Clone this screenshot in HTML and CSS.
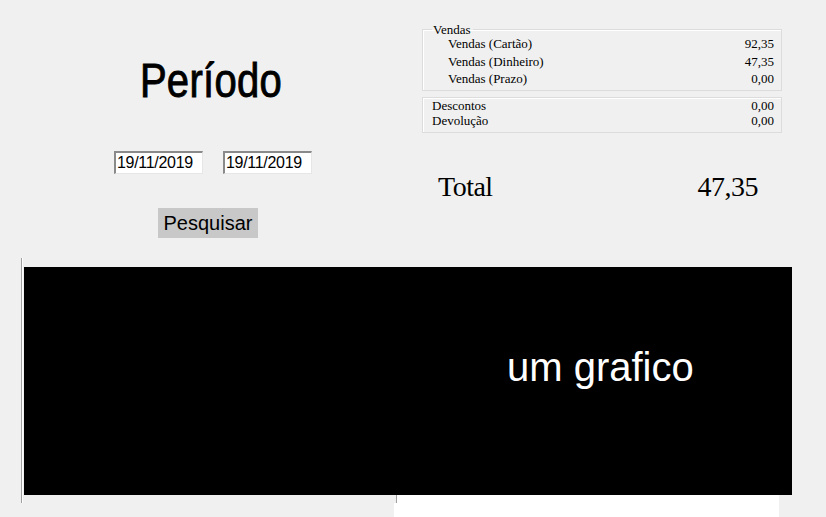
FILE: index.html
```html
<!DOCTYPE html>
<html lang="pt">
<head>
<meta charset="utf-8">
<title>Período</title>
<link rel="stylesheet" href="styles.css">
</head>
<body>
<div class="top">
  <div class="left">
    <div class="heading">Período</div>
    <div class="dates">
      <div class="date">19/11/2019</div>
      <div class="date">19/11/2019</div>
    </div>
    <div class="btn">Pesquisar</div>
  </div>
  <div class="right">
    <fieldset class="group">
      <legend>Vendas</legend>
      <div class="rows sub">
        <div class="row"><span>Vendas (Cartão)</span><span>92,35</span></div>
        <div class="row"><span>Vendas (Dinheiro)</span><span>47,35</span></div>
        <div class="row"><span>Vendas (Prazo)</span><span>0,00</span></div>
      </div>
    </fieldset>
    <div class="group2">
      <div class="row2"><span>Descontos</span><span>0,00</span></div>
      <div class="row2"><span>Devolução</span><span>0,00</span></div>
    </div>
    <div class="total"><span>Total</span><span>47,35</span></div>
  </div>
</div>
<div class="chart-row">
  <div class="rule"></div>
  <div class="chart-col">
    <div class="chart"><span class="chart-label">um grafico</span></div>
    <div class="under"></div>
  </div>
</div>
</body>
</html>
```
FILE: styles.css
```css
html, body {
  margin: 0;
  padding: 0;
  background: #f0f0f0;
  width: 826px;
  height: 517px;
  overflow: hidden;
  font-family: "Liberation Sans", Arial, sans-serif;
  color: #000;
}
.top {
  display: flex;
  height: 258px;
}
.left {
  width: 420px;
  display: flex;
  flex-direction: column;
  align-items: center;
  padding-top: 60px;
  box-sizing: border-box;
}
.heading {
  font-size: 40px;
  line-height: 40px;
  height: 40px;
  transform: scaleY(1.2);
  margin-left: 2px;
  letter-spacing: 0.3px;
  color: #000;
  -webkit-text-stroke: 0.8px #000;
}
.dates {
  display: flex;
  gap: 20px;
  margin-top: 51px;
  margin-left: 6px;
}
.date {
  width: 89px;
  height: 23px;
  box-sizing: border-box;
  background: #fff;
  border-top: 2px solid #8a8a8a;
  border-left: 2px solid #8a8a8a;
  border-right: 1px solid #e6e6e6;
  border-bottom: 1px solid #e6e6e6;
  font-size: 16px;
  line-height: 20px;
  padding-left: 1px;
  letter-spacing: -0.3px;
}
.btn {
  margin-top: 34px;
  width: 100px;
  height: 30px;
  background: #c8c8c8;
  font-size: 20px;
  line-height: 30px;
  text-align: center;
  margin-left: -4px;
}
.right {
  width: 360px;
  margin-left: 2px;
  padding-top: 23px;
  font-family: "Liberation Serif", "Times New Roman", serif;
  font-size: 13px;
}
.group {
  margin: 0;
  padding: 0 7px 2px 25px;
  border: 1px solid #dcdcdc;
  box-shadow: inset 1px 1px 0 #fff;
}
.group legend {
  margin-left: -16px;
  padding: 0 2px 0 1px;
  line-height: 13px;
}
.rows {
  margin-top: -1px;
}
.row {
  display: flex;
  justify-content: space-between;
  line-height: 17.5px;
}
.group2 {
  margin-top: 6px;
  border: 1px solid #dcdcdc;
  box-shadow: inset 1px 1px 0 #fff;
  padding: 0 7px 3px 9px;
}
.row2 {
  display: flex;
  justify-content: space-between;
  line-height: 15.5px;
}
.total {
  display: flex;
  justify-content: space-between;
  margin-top: 38px;
  padding: 0 24px 0 16px;
  font-size: 28px;
  line-height: 32px;
  letter-spacing: -0.5px;
}
.chart-row {
  display: flex;
  align-items: flex-start;
}
.rule {
  width: 2px;
  height: 245px;
  margin-left: 21px;
  background: linear-gradient(to right, #a0a0a0 0 1px, #ffffff 1px 2px);
}
.chart-col {
  margin-left: 1px;
  margin-top: 9px;
}
.chart {
  width: 768px;
  height: 228px;
  background: #000;
  color: #fff;
  box-sizing: border-box;
  padding-left: 483px;
  padding-top: 80px;
}
.chart-label {
  font-size: 40px;
  line-height: 40px;
}
.under {
  margin-left: 370px;
  width: 385px;
  height: 22px;
  background: linear-gradient(to bottom, transparent 0 8px, #fff 8px),
              linear-gradient(to right, #f0f0f0 0 2px, #a0a0a0 2px 3px, #fff 3px);
  box-sizing: border-box;
}
```
